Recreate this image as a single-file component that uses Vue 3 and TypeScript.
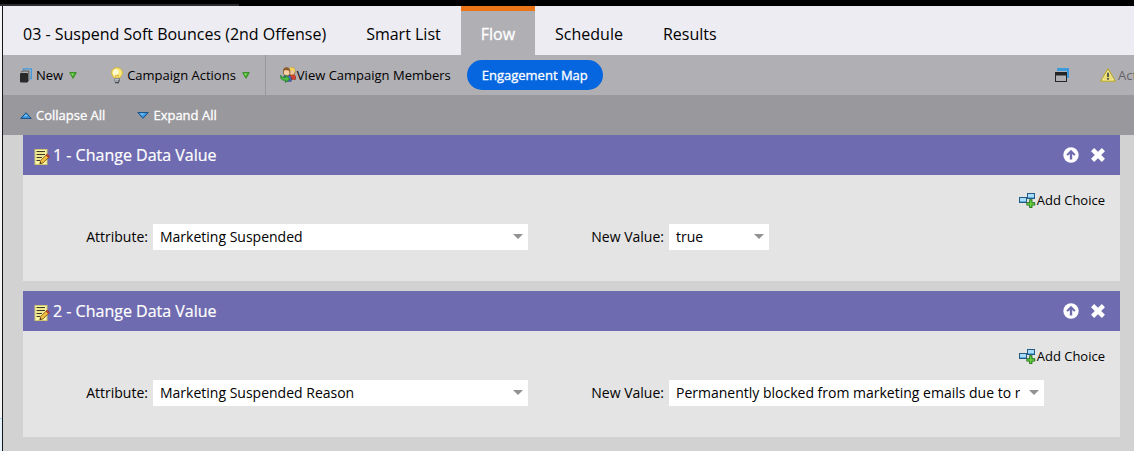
<script setup lang="ts">
import { ref } from 'vue'

interface Step {
  id: number
  attribute: string
  value: string
  wide: boolean
}

const tabs = ['03 - Suspend Soft Bounces (2nd Offense)', 'Smart List', 'Flow', 'Schedule', 'Results']
const active = ref('Flow')

const steps = ref<Step[]>([
  { id: 1, attribute: 'Marketing Suspended', value: 'true', wide: false },
  { id: 2, attribute: 'Marketing Suspended Reason', value: 'Permanently blocked from marketing emails due to r', wide: true },
])
</script>

<template>
  <div class="window">
    <div class="topline"><span></span></div>
    <div class="frame">
      <div class="edge"><span></span></div>
      <main class="main">
        <nav class="tabs">
          <button
            v-for="tab in tabs"
            :key="tab"
            type="button"
            class="tab"
            :class="{ active: tab === active }"
            @click="active = tab"
          >{{ tab }}</button>
        </nav>

        <div class="toolbar">
          <div class="group menus">
            <button type="button" class="tool new">
              <svg width="12" height="15" viewBox="0 0 12 15">
                <path d="M3.5 2.5V.8H11.3V10.5H10" fill="none" stroke="#3d9be0" stroke-width="1.3" />
                <path d="M1 4.5 3 3H9V12L7.5 14.5H1Z" fill="#b0afb4" />
                <path d="M1 4.2 2.8 3H8.8V12L8 13.4" fill="none" stroke="#4a4a4c" stroke-width=".9" />
                <rect y="5" width="8" height="9.5" rx="1" fill="#292929" />
              </svg>
              <span>New</span>
              <svg class="caret" width="8" height="7" viewBox="0 0 8 7">
                <path d="M.7.6H7.3L4 6.3Z" fill="#46ad2b" stroke="#398f28" />
                <path d="M2 1.5H5L3.6 3.8Z" fill="#8be26d" />
              </svg>
            </button>
            <button type="button" class="tool actions">
              <svg width="12" height="17" viewBox="0 0 12 17">
                <path d="M6 .7C2.8.7.6 3 .6 5.8c0 2.4 1.7 3.2 2.4 5.4h6c.7-2.2 2.4-3 2.4-5.4C11.4 3 9.2.7 6 .7Z" fill="#fbe87a" stroke="#d9b63c" />
                <path d="M5.5 1.8C3.3 2 1.8 3.5 2 6c.2 1 1 2 1.6 2.8L6 8 8 5Z" fill="#fffbd0" />
                <path d="M4.5 11 4.8 8l1.2 1 1.2-1 .3 3" fill="none" stroke="#cfa63d" stroke-width=".8" />
                <rect x="3" y="11" width="6" height="4" rx="1" fill="#6b6f76" />
                <path d="M3.5 12.2H8M3.5 14H7" stroke="#dadde2" />
                <rect x="4" y="15" width="4" height="1.3" fill="#4a4c50" />
              </svg>
              <span>Campaign Actions</span>
              <svg class="caret" width="8" height="7" viewBox="0 0 8 7">
                <path d="M.7.6H7.3L4 6.3Z" fill="#46ad2b" stroke="#398f28" />
                <path d="M2 1.5H5L3.6 3.8Z" fill="#8be26d" />
              </svg>
            </button>
          </div>
          <div class="group views">
            <button type="button" class="tool members">
              <svg width="16" height="16" viewBox="0 0 16 16">
                <path d="M8.5 9.5 10 7.5h4l1.6 2v2.8H9Z" fill="#d94330" stroke="#90251b" stroke-width=".7" />
                <path d="M9 3c0-2 1.2-2.6 3-2.6S14.8 1.3 14.8 3v3.2L13.5 8h-3L9 6.5Z" fill="#f1c49a" stroke="#80581e" stroke-width=".7" />
                <path d="M8.8 5V2.5C9 .8 10.3.3 12 .3s3 .8 3 2.7v3l-1-2-3-1Z" fill="#efd15b" />
                <path d="M3 11 4.8 8h4.4l2 2.3v4H6Z" fill="#4a72c4" stroke="#2d3f78" stroke-width=".7" />
                <path d="M3.5 4c0-2 1.3-3.2 3.2-3.2S9.8 2 9.8 4v2.8L8.3 8.8H5.2L3.5 7Z" fill="#f7cfa7" stroke="#6e4924" stroke-width=".7" />
                <path d="M3.2 5V3C3.5 1.2 5 .6 6.7.6S9.9 1.7 9.9 3.5V5L8.5 3.5 5 3Z" fill="#8e5b2b" />
                <path d="M.6 8.3C1 10.2 2.5 10.6 5.5 10.4V8.2l4.3 3.7-4.3 3.6v-2.2C2 13.4.4 12.2.6 8.3Z" fill="#50bd43" stroke="#23802a" stroke-width=".9" />
              </svg>
              <span>View Campaign Members</span>
            </button>
            <button type="button" class="map">Engagement Map</button>
          </div>
          <div class="group right">
            <button type="button" class="tool" aria-label="Open in new window">
              <svg width="14" height="14" viewBox="0 0 14 14">
                <path d="M2 0H14V10H12V3H2Z" fill="#3b9bdc" />
                <rect x=".5" y="4.5" width="11" height="9" fill="#b0afb4" stroke="#252525" />
                <rect y="4" width="12" height="3.5" fill="#252525" />
              </svg>
            </button>
            <div class="warning">
              <svg width="16" height="14" viewBox="0 0 16 14">
                <path d="M8 .8 15.3 13.2H.7Z" fill="#e8dc6e" stroke="#bda92f" stroke-width="1.2" stroke-linejoin="round" />
                <path d="M8 3 13.5 12H2.5Z" fill="none" stroke="#f3ecab" stroke-width=".8" />
                <path d="M8 4.8V9M8 10V11.7" stroke="#4e4d45" stroke-width="1.8" />
              </svg>
              <span>Act</span>
            </div>
          </div>
        </div>

        <div class="subbar">
          <button type="button" class="tool">
            <svg width="12" height="7" viewBox="0 0 12 7">
              <path d="M.8 6.4 6 .7 11.2 6.4Z" fill="#3a9ae3" stroke="#164f86" />
              <path d="M4 4.5 6 2.2 7.5 4Z" fill="#8acbf7" />
            </svg>
            <span>Collapse All</span>
          </button>
          <button type="button" class="tool">
            <svg width="12" height="7" viewBox="0 0 12 7">
              <path d="M.8.6H11.2L6 6.3Z" fill="#3a9ae3" stroke="#164f86" />
              <path d="M2.5 1.5H8L5 3Z" fill="#8acbf7" />
            </svg>
            <span>Expand All</span>
          </button>
        </div>

        <div class="steps">
          <section v-for="step in steps" :key="step.id" class="step">
            <header>
              <svg width="16" height="16" viewBox="0 0 16 16">
                <rect x="1" y=".5" width="12" height="15" fill="#fbf6a5" stroke="#d0c570" />
                <path d="M2.5 2.5H11M2.5 5.5H11M2.5 8.5H8M2.5 11.5H6" stroke="#3a3a27" stroke-width="1" />
                <path d="M2.5 4H11M2.5 7H10M2.5 10H7" stroke="#d8c967" stroke-width=".7" />
                <path d="M5.8 14.8 6.7 11.5 12.2 6 14.6 8.4 9 13.9Z" fill="#efbe42" stroke="#865b19" stroke-width=".9" />
                <path d="M12 6.2 13.2 5.2 15.4 7.4 14.4 8.5Z" fill="#df493a" stroke="#872417" stroke-width=".7" />
                <path d="M5.8 14.8 6.3 12.8 7.7 14.2Z" fill="#30281c" />
              </svg>
              <h2>{{ step.id }} - Change Data Value</h2>
              <button type="button" aria-label="Move up">
                <svg width="16" height="16" viewBox="0 0 16 16">
                  <circle cx="8" cy="8" r="7.7" fill="#fff" />
                  <path d="M8 2.8 12.6 7.4 11.2 8.8 9.2 7V12.6H6.8V7L4.8 8.8 3.4 7.4Z" fill="#6e6bb0" />
                </svg>
              </button>
              <button type="button" aria-label="Remove step">
                <svg width="16" height="16" viewBox="0 0 16 16">
                  <path d="M2.6 2.6 13.4 13.4M13.4 2.6 2.6 13.4" stroke="#fff" stroke-width="4.4" />
                </svg>
              </button>
            </header>
            <div class="body">
              <button type="button" class="tool add">
                <svg width="17" height="15" viewBox="0 0 17 15">
                  <path d="M6 5.5H9" stroke="#23506f" />
                  <rect x="8.5" y=".5" width="7" height="5" fill="#a9dcfa" stroke="#245b82" />
                  <rect x=".5" y="4.5" width="7" height="5" fill="#a9dcfa" stroke="#245b82" />
                  <path d="M9 4.5H15M1 8.5H7" stroke="#5faee0" />
                  <path d="M10.2 6.3h3.2v3h2.8v3.2h-2.8V15h-3.2v-2.5H7.4V9.3h2.8Z" fill="#1f6b1b" />
                  <path d="M11.8 7.2V14.2M8.3 10.9H15.3" stroke="#6ad43c" stroke-width="1.5" />
                </svg>
                <span>Add Choice</span>
              </button>
              <div class="fields">
                <label class="first" :for="'attribute-' + step.id">Attribute:</label>
                <div class="combo wide">
                  <select :id="'attribute-' + step.id" v-model="step.attribute">
                    <option>{{ step.attribute }}</option>
                  </select>
                </div>
                <label class="second" :for="'value-' + step.id">New Value:</label>
                <div class="combo" :class="{ wide: step.wide }">
                  <select :id="'value-' + step.id" v-model="step.value">
                    <option>{{ step.value }}</option>
                  </select>
                </div>
              </div>
            </div>
          </section>
        </div>
      </main>
    </div>
  </div>
</template>

<style>
body {
  background: #d2d2d2;
}
</style>

<style scoped>
* {
  box-sizing: border-box;
}
.window {
  min-height: 100vh;
  display: flex;
  flex-direction: column;
  overflow: hidden;
  font-family: "Open Sans", "Noto Sans", sans-serif;
  font-size: 13px;
  color: #000;
}
button {
  border: 0;
  padding: 0;
  background: none;
  font: inherit;
  color: inherit;
  white-space: nowrap;
}
svg {
  display: block;
  flex: none;
}
.topline {
  height: 6px;
  background: #000;
  display: flex;
  align-items: flex-end;
}
.topline span {
  width: 239px;
  height: 2px;
  background: #2b2a2c;
}
.frame {
  flex: 1;
  display: flex;
}
.edge {
  width: 3px;
  flex: none;
  background: #f5f5f7;
  border-right: 1px solid #161616;
  display: flex;
  align-items: flex-end;
}
.edge span {
  width: 2px;
  height: 33px;
  background: #e6f2fb;
  border-top: 1px solid #a5d3ef;
}
.main {
  flex: 1;
  min-width: 0;
  background: #d2d2d2;
}
.tabs {
  height: 49px;
  display: flex;
  background: #edecf2;
}
.tab {
  padding: 7px 20px 0;
  font-size: 16px;
}
.tab.active {
  background: #b0afb4;
  border-top: 5px solid #ec7518;
  padding-top: 2px;
  color: #fff;
  -webkit-text-stroke: 0.3px #fff;
}
.toolbar {
  height: 40px;
  display: flex;
  background: #b0afb4;
}
.group,
.tool {
  display: flex;
  align-items: center;
}
.tool {
  gap: 4px;
}
.caret {
  margin-left: 2px;
}
.menus {
  gap: 34px;
  padding: 0 15px 0 17px;
  border-right: 1px solid #99989d;
}
.views {
  gap: 16px;
  padding-left: 14px;
}
.members,
.add {
  gap: 1px;
}
.map {
  height: 30px;
  padding: 0 15px;
  border-radius: 15px;
  background: #0566df;
  color: #fff;
  font-weight: 500;
  -webkit-text-stroke: 0.3px #fff;
}
.right {
  margin-left: auto;
  gap: 31px;
}
.warning {
  width: 34px;
  display: flex;
  align-items: center;
  gap: 2px;
  overflow: hidden;
  color: #65646a;
}
.subbar {
  height: 40px;
  padding: 0 17px;
  display: flex;
  align-items: center;
  gap: 32px;
  background: #99989d;
  color: #fff;
  -webkit-text-stroke: 0.3px #fff;
}
.steps {
  display: flex;
  flex-direction: column;
  gap: 10px;
  padding: 0 14px 14px 20px;
}
header {
  height: 40px;
  padding: 0 14px 0 11px;
  display: flex;
  align-items: center;
  background: #6e6bb0;
  color: #fff;
}
header > svg {
  margin-top: 4px;
}
h2 {
  margin: 0 auto 0 3px;
  font-size: 16px;
  font-weight: 400;
  -webkit-text-stroke: 0.2px #fff;
}
header button + button {
  margin-left: 11px;
}
.body {
  height: 106px;
  padding: 16px 15px 0 20px;
  background: #e4e4e4;
}
.add {
  height: 18px;
  margin-left: auto;
}
.fields {
  display: flex;
  align-items: center;
  margin-top: 15px;
  font-size: 14px;
}
label {
  flex: none;
  text-align: right;
  padding: 0 5px 2px 0;
}
.first {
  width: 110px;
}
.second {
  width: 141px;
}
.combo {
  position: relative;
  width: 100px;
  height: 26px;
}
.combo.wide {
  width: 375px;
}
.combo::after {
  content: "";
  position: absolute;
  right: 5px;
  top: 10px;
  border: solid transparent;
  border-width: 5px 5px 0;
  border-top-color: #929292;
  pointer-events: none;
}
select {
  appearance: none;
  width: 100%;
  height: 100%;
  padding: 0 24px 2px 7px;
  border: 0;
  border-radius: 0;
  background: #fff;
  font: inherit;
  color: inherit;
  text-overflow: clip;
}
</style>
